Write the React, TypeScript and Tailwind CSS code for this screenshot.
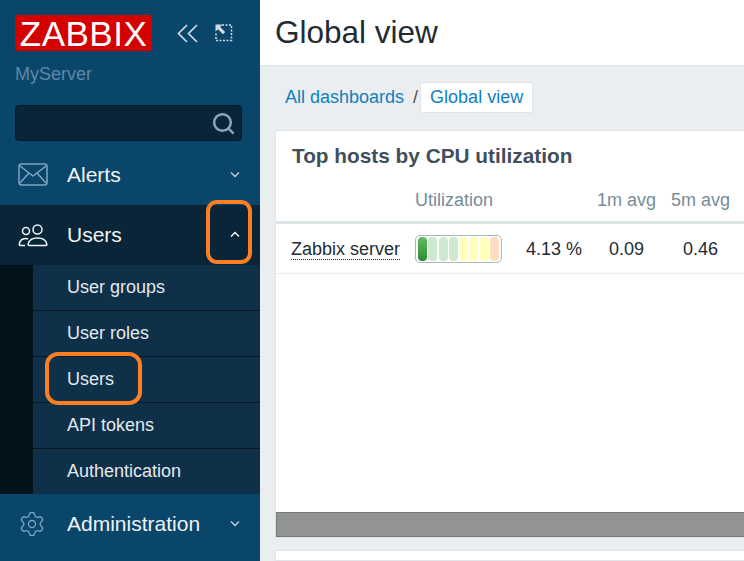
/**
 * Zabbix dashboard with the Users menu open and two hand-drawn marks on it.
 */
import { Search, Settings } from 'lucide-react';
import type { ReactNode } from 'react';

const SUB_ITEMS = ['User groups', 'User roles', 'Users', 'API tokens', 'Authentication'];

const METER = [
  'bg-gradient-to-b from-[#66bb66] via-[#43a647] to-[#2f8a38]',
  'bg-[#cfe8d0]',
  'bg-[#cfe8d0]',
  'bg-[#cfe8d0]',
  'bg-[#ffffbb]',
  'bg-[#ffffbb]',
  'bg-[#ffffbb]',
  'bg-[#ffdcc0]',
];

function Chevron({ up = false }: { up?: boolean }) {
  return (
    <svg width="10" height="7" viewBox="0 0 10 7" fill="none" stroke="currentColor" strokeWidth="1.3">
      <path d={up ? 'M1 5.5 5 1.5l4 4' : 'M1 1.5l4 4 4-4'} />
    </svg>
  );
}

function CollapseIcon() {
  return (
    <svg width="21" height="19" viewBox="0 0 21 19" fill="none" stroke="#cfdbe3" strokeWidth="1.700">
      <path d="M10 1 1.500 9.500 10 18M20 1l-8.500 8.500L20 18" />
    </svg>
  );
}

function MailIcon() {
  return (
    <svg width="30" height="23" viewBox="0 0 30 23" fill="none" stroke="#7ea6c2" strokeWidth="1.500">
      <rect x="1" y="1" width="28" height="21" rx="2.500" />
      <path d="M2 3l13 10L28 3M2 20l9-10M28 20l-9-10" />
    </svg>
  );
}

function UsersIcon() {
  return (
    <svg width="30" height="24" viewBox="0 0 30 24" fill="none" stroke="#f2f5f7" strokeWidth="1.500">
      <circle cx="19.500" cy="6.500" r="4.500" />
      <circle cx="8" cy="8" r="3.500" />
      <path d="M11.500 22.500c-1.500 0-1.500-1-1.200-2 .9-3.300 4.500-5.500 9.200-5.500s8.300 2.200 9.200 5.500c.3 1 .3 2-1.200 2z" />
      <path d="M7 22.500H2.500c-1.200 0-1.500-.8-1.200-1.800.8-3 3-5 6-5.200 1.200-.1 2 .1 2.700.5" />
    </svg>
  );
}

function ExpandIcon() {
  return (
    <svg width="20" height="20" viewBox="0 0 20 20" fill="none">
      <path d="M8 2h9.500v15.500H2V9" stroke="#cfdbe3" strokeWidth="1.500" strokeDasharray="2 1.500" />
      <path d="M1.500 1.500h7L6.200 4l5 5-2.200 2.200-5-5-2.500 2.300z" fill="#cfdbe3" />
    </svg>
  );
}

function MenuRow({ icon, label, open = false }: { icon: ReactNode; label: string; open?: boolean }) {
  return (
    <div
      className={`flex h-[60px] items-center pb-[1px] pl-[18px] pr-[20px] text-[21px] text-[#f0f3f5] ${
        open ? 'bg-[#0a2537]' : ''
      }`}
    >
      <span className="flex w-[49px] shrink-0">{icon}</span>
      <span className="flex-1 leading-none">{label}</span>
      <span className={open ? 'text-white' : 'text-[#c5d3dc]'}>
        <Chevron up={open} />
      </span>
    </div>
  );
}

function Sidebar() {
  return (
    <aside className="relative flex h-full w-[260px] shrink-0 flex-col bg-[#0a466a]">
      <div className="flex h-[51px] items-end pl-[15px]">
        <div className="flex h-[36px] w-[137px] items-center justify-center bg-[#d40000] text-[35px] leading-none tracking-[0.5px] text-white">
          ZABBIX
        </div>
        <div className="mb-[8px] ml-[25px] flex items-center gap-[16px]">
          <CollapseIcon />
          <ExpandIcon />
        </div>
      </div>
      <div className="mt-[13px] pl-[15px] text-[18px] leading-[21px] text-[#5f87a6]">MyServer</div>
      <div className="ml-[15px] mr-[18px] mt-[20px] flex h-[36px] items-center justify-end rounded-[4px] border border-[#051825] bg-[#0a2537] pr-[5px] text-[#8aa6b8]">
        <Search size={25} strokeWidth={2.400} />
      </div>
      <div className="mt-[4px]">
        <MenuRow icon={<MailIcon />} label="Alerts" />
        <MenuRow icon={<UsersIcon />} label="Users" open />
        <div className="bg-[#03131c] pl-[33px]">
          {SUB_ITEMS.map((item, i) => (
            <div
              key={item}
              className={`flex items-center bg-[#0f3049] pl-[34px] text-[18px] text-[#e3e8ec] ${
                i < SUB_ITEMS.length - 1 ? 'h-[46px] border-b border-[#051825]' : 'h-[45px]'
              }`}
            >
              {item}
            </div>
          ))}
        </div>
        <MenuRow icon={<Settings size={28} strokeWidth={1.100} color="#7ea6c2" />} label="Administration" />
      </div>
      {/* orange marks made on the screenshot */}
      <div className="absolute left-[206px] top-[200px] h-[64px] w-[46px] rounded-[11px] border-[4px] border-[#fd7f23]" />
      <div className="absolute left-[45px] top-[352px] h-[53px] w-[97px] rounded-[13px] border-[4px] border-[#fd7f23]" />
    </aside>
  );
}

function HostsTable() {
  return (
    <div className="mt-[12px]">
      <div className="flex h-[44px] items-center border-b-[3px] border-[#dfe4e7] text-[18px] text-[#768d99]">
        <span className="ml-[139px] w-[182px]">Utilization</span>
        <span className="w-[74px]">1m avg</span>
        <span>5m avg</span>
      </div>
      <div className="flex h-[50px] items-center border-b border-[#ebeef0] pt-[1px] text-[18px] text-[#1f2c33]">
        <span className="ml-[15px] w-[124px]">
          <span className="border-b border-dotted border-[#1f2c33] leading-[20px]">Zabbix server</span>
        </span>
        <div className="flex h-[28px] w-[87px] items-center gap-[1.300px] rounded-[5px] border border-[#a9b6bd] bg-white px-[2px]">
          {METER.map((color, i) => (
            <span key={i} className={`h-[24px] w-[9px] rounded-[4px] blur-[0.5px] ${color}`} />
          ))}
        </div>
        <span className="ml-[24px] w-[83px]">4.13 %</span>
        <span className="w-[74px]">0.09</span>
        <span>0.46</span>
      </div>
    </div>
  );
}

export default function App() {
  return (
    <div className="flex h-[561px] w-[744px] overflow-hidden font-['Liberation_Sans',Arial,sans-serif]">
      <Sidebar />
      <main className="flex min-w-0 flex-1 flex-col bg-[#ebeef0]">
        <header className="flex h-[66px] shrink-0 items-center border-b border-[#dfe4e7] bg-white pl-[15px] pt-[1px] text-[31.500px] text-[#1f2c33]">
          Global view
        </header>
        <nav className="mt-[16px] flex h-[31px] items-center pl-[25px] text-[18px] text-[#0f7fbf]">
          <span>All dashboards</span>
          <span className="ml-[9px] mr-[2px] text-[#4f4f4f]">/</span>
          <span className="flex h-[31px] items-center rounded-[2px] border border-[#dfe4e7] bg-white px-[9px]">
            Global view
          </span>
        </nav>
        <section className="ml-[15px] mt-[17px] flex h-[408px] w-[501px] shrink-0 flex-col border border-r-0 border-[#dfe4e7] bg-white">
          <h2 className="ml-[16px] mt-[13px] text-[20.800px] font-bold leading-[24px] text-[#3f4f5c]">
            Top hosts by CPU utilization
          </h2>
          <HostsTable />
          <div className="mt-auto h-[25px] border border-[#777878] bg-[#929393]" />
        </section>
        <section className="ml-[15px] mt-[12px] flex-1 border border-r-0 border-[#dfe4e7] bg-white" />
      </main>
    </div>
  );
}
